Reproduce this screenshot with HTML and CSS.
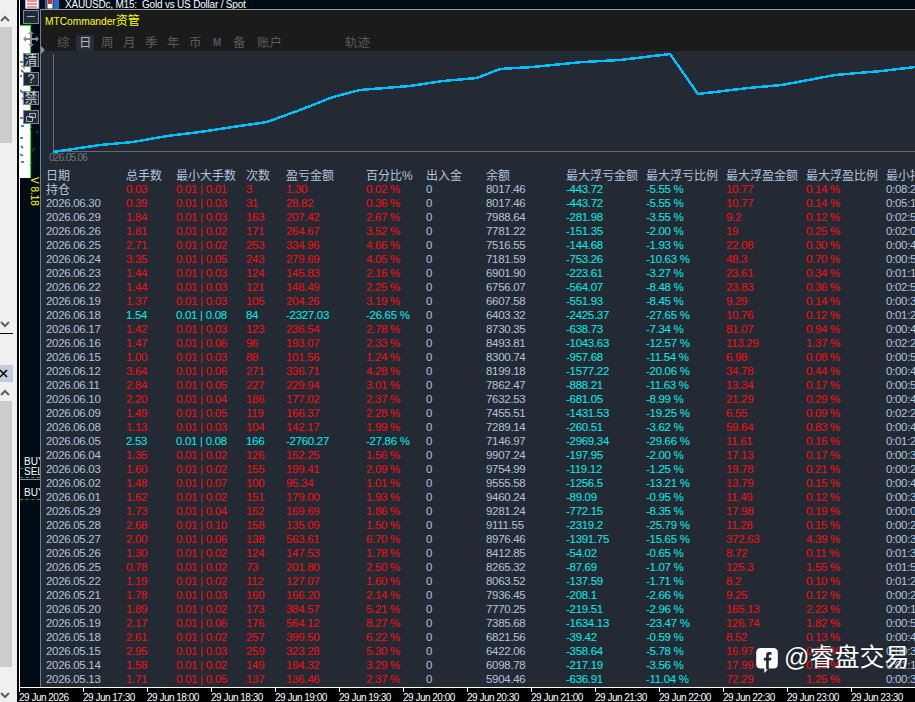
FILE: index.html
```html
<!DOCTYPE html>
<html lang="zh">
<head>
    <meta charset="UTF-8">
    <title>MTCommander资管</title>
    <link rel="stylesheet" href="styles.css">
</head>
<body>
<div class="app">
    <div class="dock">
        <div class="scrollbar first">
            <svg class="chev" width="12" height="10" viewBox="0 0 12 10"><polyline points="1,7 5,3 9,7"/></svg>
            <div class="track"><div class="thumb thumb-a"></div></div>
            <svg class="chev" width="12" height="10" viewBox="0 0 12 10"><polyline points="1,3 5,7 9,3"/></svg>
        </div>
        <div class="dock-tab"><svg width="9" height="9" viewBox="0 0 9 9"><path d="M0 1 L7 8 M7 1 L0 8"/></svg></div>
        <div class="scrollbar second">
            <svg class="chev" width="12" height="10" viewBox="0 0 12 10"><polyline points="1,7 5,3 9,7"/></svg>
            <div class="track"><div class="thumb thumb-b"></div></div>
            <svg class="chev" width="12" height="10" viewBox="0 0 12 10"><polyline points="1,3 5,7 9,3"/></svg>
        </div>
    </div>

    <div class="terminal">
        <div class="chart-title">
            <svg class="title-icons" width="40" height="9" viewBox="0 0 40 9">
                <rect x="0" y="-3" width="14" height="12" fill="#fff" stroke="#2a6fc0"/>
                <path d="M2 1h10M2 4h10M2 7h10" stroke="#d22" stroke-width="1.2"/>
                <rect x="20" y="-3" width="14" height="12" fill="#1c6fd0"/>
                <rect x="22" y="-3" width="6" height="12" fill="#fff" stroke="#333"/>
                <rect x="23" y="0" width="4" height="4" fill="#c33"/>
            </svg>
            <span>XAUUSDc, M15:&nbsp; Gold vs US Dollar / Spot</span>
        </div>
        <div class="chart-area">
            <div class="tool-strip">
                <div class="mini-chart">
                    <svg width="20" height="153" viewBox="0 0 20 153">
                        <path d="M0 36h3M1 44l3 3M0 50h2M0 64l3 3M2 72l2 2M0 92h3M1 100h3M0 112h3M1 120l2 2M0 128l3 2M1 136h3" stroke="#1560b0" stroke-width="1.5"/>
                        <path d="M1 40h2M3 42h2" stroke="#c33" stroke-width="1"/>
                    </svg>
                </div>
                <svg class="noise" width="10" height="90" viewBox="0 0 10 90">
                    <path d="M0 2l2 2M3 6l2-2M6 8l2 2M1 30l2-2M0 44l2-2M6 48l2-2M2 66l3-3M0 80l2-2" stroke="#1560b0"/>
                </svg>
                <div class="tool-btn">
                    <svg width="8" height="2" viewBox="0 0 8 2"><rect width="8" height="1" y="0" fill="#aab"/></svg>
                </div>
                <div class="tool-move">
                    <svg width="16" height="16" viewBox="0 0 16 16"><path d="M8 0 L11 3 H9 V7 H13 V5 L16 8 L13 11 V9 H9 V13 H11 L8 16 L5 13 H7 V9 H3 V11 L0 8 L3 5 V7 H7 V3 H5 Z" fill="#8a8a8a"/></svg>
                </div>
                <div class="tool-btn">清</div>
                <div class="tool-btn">?</div>
                <div class="tool-btn">禁</div>
                <div class="tool-btn">
                    <svg width="10" height="9" viewBox="0 0 10 9"><path d="M3.5 .5h6v4h-6zM.5 3.5h6v5h-6z" fill="#222a33" stroke="#aeb6c2"/></svg>
                </div>
                <div class="version">V 8.18</div>
                <div class="level buy-a">BUY</div>
                <div class="level sell-a">SEL</div>
                <div class="dash dash-tick"></div>
                <div class="dash dash-a"></div>
                <div class="sep"></div>
                <div class="level buy-b">BUY</div>
                <div class="dash dash-b"></div>
            </div>
            <div class="panel">
                <div class="panel-head">
                    <div class="panel-title">MTCommander<span class="panel-title-cjk">资管</span></div>
                    <div class="tabs">
                        <span class="tab">综</span>
                        <span class="tab active">日</span>
                        <span class="tab">周</span>
                        <span class="tab">月</span>
                        <span class="tab">季</span>
                        <span class="tab">年</span>
                        <span class="tab">币</span>
                        <span class="tab mark">M</span>
                        <span class="tab">备</span>
                        <span class="tab wide">账户</span>
                        <span class="tab wide trail">轨迹</span>
                    </div>
                </div>
                <div class="equity">
                    <svg width="874" height="116" viewBox="41 51 874 116">
                        <path d="M53.500 54 V151.500 H915" fill="none" stroke="#6a6a6a"/>
                        <polyline class="equity-line" points="53,152 100,145 133,142 167,136 200,132 233,127 267,122 300,110 333,97 360,90 410,86 443,81 477,78 500,69 533,67 583,62 620,60 670,54 698,94 748,88 782,85 835,75 882,71 915,67"/>
                    </svg>
                    <span class="equity-date">026.05.06</span>
                    <span class="collapse"></span>
                </div>
                <table class="stats">
                    <colgroup>
                        <col class="w80"><col class="w50"><col class="w70"><col class="w40"><col class="w80"><col class="w60"><col class="w60"><col class="w80"><col class="w80"><col class="w80"><col class="w80"><col class="w80"><col class="w80">
                    </colgroup>
                    <thead>
                        <tr><th>日期<th>总手数<th>最小大手数<th>次数<th>盈亏金额<th>百分比%<th>出入金<th>余额<th>最大浮亏金额<th>最大浮亏比例<th>最大浮盈金额<th>最大浮盈比例<th>最小持仓时间
                    </thead>
                    <tbody>
                        <tr><td class="cjk">持仓<td>0.03<td>0.01 | 0.01<td>3<td>1.30<td>0.02 %<td>0<td>8017.46<td>-443.72<td>-5.55 %<td>10.77<td>0.14 %<td>0:08:20
                        <tr><td>2026.06.30<td>0.39<td>0.01 | 0.03<td>31<td>28.82<td>0.36 %<td>0<td>8017.46<td>-443.72<td>-5.55 %<td>10.77<td>0.14 %<td>0:05:10
                        <tr><td>2026.06.29<td>1.84<td>0.01 | 0.03<td>163<td>207.42<td>2.67 %<td>0<td>7988.64<td>-281.98<td>-3.55 %<td>9.2<td>0.12 %<td>0:02:50
                        <tr><td>2026.06.26<td>1.81<td>0.01 | 0.02<td>171<td>264.67<td>3.52 %<td>0<td>7781.22<td>-151.35<td>-2.00 %<td>19<td>0.25 %<td>0:02:00
                        <tr><td>2026.06.25<td>2.71<td>0.01 | 0.02<td>253<td>334.96<td>4.66 %<td>0<td>7516.55<td>-144.68<td>-1.93 %<td>22.08<td>0.30 %<td>0:00:40
                        <tr><td>2026.06.24<td>3.35<td>0.01 | 0.05<td>243<td>279.69<td>4.05 %<td>0<td>7181.59<td>-753.26<td>-10.63 %<td>48.3<td>0.70 %<td>0:00:50
                        <tr><td>2026.06.23<td>1.44<td>0.01 | 0.03<td>124<td>145.83<td>2.16 %<td>0<td>6901.90<td>-223.61<td>-3.27 %<td>23.61<td>0.34 %<td>0:01:10
                        <tr><td>2026.06.22<td>1.44<td>0.01 | 0.03<td>121<td>148.49<td>2.25 %<td>0<td>6756.07<td>-564.07<td>-8.48 %<td>23.83<td>0.36 %<td>0:02:50
                        <tr><td>2026.06.19<td>1.37<td>0.01 | 0.03<td>105<td>204.26<td>3.19 %<td>0<td>6607.58<td>-551.93<td>-8.45 %<td>9.29<td>0.14 %<td>0:00:30
                        <tr class="loss"><td>2026.06.18<td>1.54<td>0.01 | 0.08<td>84<td>-2327.03<td>-26.65 %<td>0<td>6403.32<td>-2425.37<td>-27.65 %<td>10.76<td>0.12 %<td>0:01:20
                        <tr><td>2026.06.17<td>1.42<td>0.01 | 0.03<td>123<td>236.54<td>2.78 %<td>0<td>8730.35<td>-638.73<td>-7.34 %<td>81.07<td>0.94 %<td>0:00:40
                        <tr><td>2026.06.16<td>1.47<td>0.01 | 0.06<td>96<td>193.07<td>2.33 %<td>0<td>8493.81<td>-1043.63<td>-12.57 %<td>113.29<td>1.37 %<td>0:02:20
                        <tr><td>2026.06.15<td>1.00<td>0.01 | 0.03<td>88<td>101.56<td>1.24 %<td>0<td>8300.74<td>-957.68<td>-11.54 %<td>6.98<td>0.08 %<td>0:00:50
                        <tr><td>2026.06.12<td>3.64<td>0.01 | 0.06<td>271<td>336.71<td>4.28 %<td>0<td>8199.18<td>-1577.22<td>-20.06 %<td>34.78<td>0.44 %<td>0:00:40
                        <tr><td>2026.06.11<td>2.84<td>0.01 | 0.05<td>227<td>229.94<td>3.01 %<td>0<td>7862.47<td>-888.21<td>-11.63 %<td>13.34<td>0.17 %<td>0:00:50
                        <tr><td>2026.06.10<td>2.20<td>0.01 | 0.04<td>186<td>177.02<td>2.37 %<td>0<td>7632.53<td>-681.05<td>-8.99 %<td>21.29<td>0.29 %<td>0:00:40
                        <tr><td>2026.06.09<td>1.49<td>0.01 | 0.05<td>119<td>166.37<td>2.28 %<td>0<td>7455.51<td>-1431.53<td>-19.25 %<td>6.55<td>0.09 %<td>0:02:20
                        <tr><td>2026.06.08<td>1.13<td>0.01 | 0.03<td>104<td>142.17<td>1.99 %<td>0<td>7289.14<td>-260.51<td>-3.62 %<td>59.64<td>0.83 %<td>0:00:40
                        <tr class="loss"><td>2026.06.05<td>2.53<td>0.01 | 0.08<td>166<td>-2760.27<td>-27.86 %<td>0<td>7146.97<td>-2969.34<td>-29.66 %<td>11.61<td>0.16 %<td>0:01:20
                        <tr><td>2026.06.04<td>1.35<td>0.01 | 0.02<td>126<td>152.25<td>1.56 %<td>0<td>9907.24<td>-197.95<td>-2.00 %<td>17.13<td>0.17 %<td>0:00:30
                        <tr><td>2026.06.03<td>1.60<td>0.01 | 0.02<td>155<td>199.41<td>2.09 %<td>0<td>9754.99<td>-119.12<td>-1.25 %<td>19.78<td>0.21 %<td>0:00:20
                        <tr><td>2026.06.02<td>1.48<td>0.01 | 0.07<td>100<td>95.34<td>1.01 %<td>0<td>9555.58<td>-1256.5<td>-13.21 %<td>13.79<td>0.15 %<td>0:00:40
                        <tr><td>2026.06.01<td>1.62<td>0.01 | 0.02<td>151<td>179.00<td>1.93 %<td>0<td>9460.24<td>-89.09<td>-0.95 %<td>11.49<td>0.12 %<td>0:00:30
                        <tr><td>2026.05.29<td>1.73<td>0.01 | 0.04<td>152<td>169.69<td>1.86 %<td>0<td>9281.24<td>-772.15<td>-8.35 %<td>17.98<td>0.19 %<td>0:00:00
                        <tr><td>2026.05.28<td>2.68<td>0.01 | 0.10<td>158<td>135.09<td>1.50 %<td>0<td>9111.55<td>-2319.2<td>-25.79 %<td>11.28<td>0.15 %<td>0:00:20
                        <tr><td>2026.05.27<td>2.00<td>0.01 | 0.06<td>138<td>563.61<td>6.70 %<td>0<td>8976.46<td>-1391.75<td>-15.65 %<td>372.63<td>4.39 %<td>0:00:30
                        <tr><td>2026.05.26<td>1.30<td>0.01 | 0.02<td>124<td>147.53<td>1.78 %<td>0<td>8412.85<td>-54.02<td>-0.65 %<td>8.72<td>0.11 %<td>0:01:30
                        <tr><td>2026.05.25<td>0.78<td>0.01 | 0.02<td>73<td>201.80<td>2.50 %<td>0<td>8265.32<td>-87.69<td>-1.07 %<td>125.3<td>1.55 %<td>0:01:50
                        <tr><td>2026.05.22<td>1.19<td>0.01 | 0.02<td>112<td>127.07<td>1.60 %<td>0<td>8063.52<td>-137.59<td>-1.71 %<td>8.2<td>0.10 %<td>0:01:20
                        <tr><td>2026.05.21<td>1.78<td>0.01 | 0.03<td>160<td>166.20<td>2.14 %<td>0<td>7936.45<td>-208.1<td>-2.66 %<td>9.25<td>0.12 %<td>0:00:20
                        <tr><td>2026.05.20<td>1.89<td>0.01 | 0.02<td>173<td>384.57<td>5.21 %<td>0<td>7770.25<td>-219.51<td>-2.96 %<td>165.13<td>2.23 %<td>0:00:10
                        <tr><td>2026.05.19<td>2.17<td>0.01 | 0.06<td>176<td>564.12<td>8.27 %<td>0<td>7385.68<td>-1634.13<td>-23.47 %<td>126.74<td>1.82 %<td>0:00:50
                        <tr><td>2026.05.18<td>2.61<td>0.01 | 0.02<td>257<td>399.50<td>6.22 %<td>0<td>6821.56<td>-39.42<td>-0.59 %<td>8.52<td>0.13 %<td>0:00:40
                        <tr><td>2026.05.15<td>2.95<td>0.01 | 0.03<td>259<td>323.28<td>5.30 %<td>0<td>6422.06<td>-358.64<td>-5.78 %<td>16.97<td>0.28 %<td>0:00:30
                        <tr><td>2026.05.14<td>1.58<td>0.01 | 0.02<td>149<td>194.32<td>3.29 %<td>0<td>6098.78<td>-217.19<td>-3.56 %<td>17.99<td>0.29 %<td>0:01:10
                        <tr><td>2026.05.13<td>1.71<td>0.01 | 0.05<td>137<td>136.46<td>2.37 %<td>0<td>5904.46<td>-636.91<td>-11.04 %<td>72.29<td>1.25 %<td>0:00:30
                    </tbody>
                </table>
                <div class="watermark">
                    <svg width="26" height="27" viewBox="0 0 26 30"><path d="M6 1H20Q25 1 25 6V19Q25 24 20 24H15L10 29L10 24H6Q1 24 1 19V6Q1 1 6 1Z" fill="#fff"/><path d="M18 5.500H15.500Q12 5.500 12 9V12H9.500V15H12V25H15V15H17.500L18 12H15V9.500Q15 8.500 16 8.500H18Z" fill="#232a33"/></svg>
                    <span>@睿盘交易</span>
                </div>
            </div>
        </div>
        <div class="time-axis">
            <span>29 Jun 2026</span>
            <span>29 Jun 17:30</span>
            <span>29 Jun 18:00</span>
            <span>29 Jun 18:30</span>
            <span>29 Jun 19:00</span>
            <span>29 Jun 19:30</span>
            <span>29 Jun 20:00</span>
            <span>29 Jun 20:30</span>
            <span>29 Jun 21:00</span>
            <span>29 Jun 21:30</span>
            <span>29 Jun 22:00</span>
            <span>29 Jun 22:30</span>
            <span>29 Jun 23:00</span>
            <span>29 Jun 23:30</span>
        </div>
    </div>
</div>
</body>
</html>
```

FILE: styles.css
```css
html, body {
    margin: 0;
    height: 100%;
    overflow: hidden;
    background: #000;
}
.app {
    display: flex;
    width: 915px;
    height: 702px;
    font-family: "Liberation Sans", "Noto Sans CJK SC", sans-serif;
    overflow: hidden;
}

/* left dock with the two scrollbars */
.dock {
    width: 17px;
    flex: none;
    margin-right: 2px;
    background: #f0f0f0;
    display: flex;
    flex-direction: column;
}
.scrollbar {
    display: flex;
    flex-direction: column;
}
.scrollbar.first {
    height: 334px;
    padding-top: 14px;
    padding-bottom: 4px;
    box-sizing: border-box;
    border-bottom: 1px solid #000;
    width: 13px;
    margin-bottom: 31px;
}
.scrollbar.second {
    flex: 1;
    padding-top: 6px;
    padding-bottom: 2px;
    box-sizing: border-box;
}
.chev {
    flex: none;
}
.chev polyline {
    fill: none;
    stroke: #606060;
    stroke-width: 2;
}
.track {
    flex: 1;
    padding-top: 3px;
}
.thumb {
    width: 12px;
    background: #cdcdcd;
}
.thumb-a {
    height: 116px;
}
.thumb-b {
    height: 266px;
}
.dock-tab {
    height: 17px;
    width: 13px;
    background: #bfcddb;
    display: flex;
    align-items: center;
}
.dock-tab path {
    stroke: #000;
    stroke-width: 1.5;
    fill: none;
}

/* chart window */
.terminal {
    flex: 1;
    min-width: 0;
    display: flex;
    flex-direction: column;
    border-left: 1px solid #fff;
    background: #010b16;
}
.chart-title {
    height: 9px;
    flex: none;
    display: flex;
    align-items: flex-end;
    overflow: hidden;
    padding-left: 5px;
    color: #fff;
    font-size: 10px;
    letter-spacing: -.2px;
    line-height: 9px;
}
.chart-title span {
    white-space: nowrap;
}
.title-icons {
    flex: none;
}
.chart-area {
    flex: 1;
    min-height: 0;
    display: flex;
}

/* narrow column of tool buttons */
.tool-strip {
    position: relative;
    width: 20px;
    flex: none;
    padding: 1px 0 0 3px;
    box-sizing: border-box;
    display: flex;
    flex-direction: column;
    gap: 5px;
}
.mini-chart {
    position: absolute;
    left: 0;
    top: 16px;
    width: 10px;
    height: 152px;
    background: #fff;
    border-top: 1px solid #0f0;
    border-right: 1px solid #0f0;
    overflow: hidden;
}
.noise {
    position: absolute;
    left: 10px;
    top: 76px;
}
.tool-btn {
    position: relative;
    width: 14px;
    height: 12px;
    border: 1px solid #7f8a99;
    background: #222a33;
    color: #c8ced6;
    font-size: 13px;
    line-height: 12px;
    text-align: center;
    display: flex;
    align-items: center;
    justify-content: center;
    flex: none;
}
.tool-move {
    position: relative;
    height: 16px;
    line-height: 0;
    flex: none;
    margin-top: 2px;
    margin-bottom: 1px;
}
.version {
    position: absolute;
    left: 9px;
    top: 168px;
    writing-mode: vertical-rl;
    color: #ffff00;
    font-size: 10px;
    line-height: 10px;
    white-space: nowrap;
}
.level {
    position: absolute;
    left: 4px;
    color: #fff;
    font-size: 10px;
    line-height: 10px;
    width: 16px;
    overflow: hidden;
}
.buy-a { top: 448px; }
.sell-a { top: 458px; }
.buy-b { top: 479px; }
.dash {
    position: absolute;
    left: 0;
    width: 20px;
    border-top: 1px dashed #22b222;
}
.dash-tick {
    top: 459px;
    width: 3px;
}
.dash-a { top: 468px; }
.dash-b { top: 490px; }
.sep {
    position: absolute;
    left: 0;
    top: 470px;
    width: 20px;
    height: 1px;
    background: #8a8f96;
}

/* report panel */
.panel {
    position: relative;
    flex: 1;
    min-width: 0;
    overflow: hidden;
    background: #232a33;
    border-left: 1px solid #6d7f95;
    border-top: 1px solid #9a9a9a;
}
.panel-head {
    height: 41px;
    background: #1b1b1b;
    padding-left: 4px;
}
.panel-title {
    height: 25px;
    padding-top: 4px;
    box-sizing: border-box;
    color: #ffff00;
    font-size: 10.200px;
    line-height: 14px;
}
.panel-title-cjk {
    font-size: 12px;
}
.tabs {
    display: flex;
    padding-left: 12px;
    color: #5c5c5c;
    font-size: 12.500px;
    line-height: 16px;
}
.tab {
    width: 22px;
    flex: none;
    text-align: left;
}
.tab.active {
    color: #aab8c8;
    background: #2a2f36;
    width: 18px;
    margin: 0 7px 0 -3px;
    padding-left: 3px;
    box-sizing: border-box;
    border-radius: 2px;
}
.tab.mark {
    font-size: 10px;
    font-weight: bold;
    color: #4b5563;
    padding-left: 2px;
    box-sizing: border-box;
}
.tab.wide {
    width: 40px;
    margin-left: 2px;
}
.tab.trail {
    margin-left: 48px;
}
.equity {
    position: relative;
    height: 118px;
}
.equity svg {
    display: block;
}
.equity-line {
    fill: none;
    stroke: #00bfff;
    stroke-width: 2.500;
    shape-rendering: crispEdges;
}
.equity-date {
    position: absolute;
    left: 8px;
    top: 101px;
    color: #707780;
    font-size: 10px;
    letter-spacing: -.7px;
    line-height: 12px;
}
.collapse {
    position: absolute;
    left: 0;
    top: -5px;
    border-left: 4px solid #8a8f96;
    border-top: 4px solid transparent;
    border-bottom: 4px solid transparent;
}

.stats {
    table-layout: fixed;
    width: 870px;
    margin-left: 5px;
    border-collapse: collapse;
    font-size: 11.500px;
    letter-spacing: -.3px;
    line-height: 13px;
}
.w80 { width: 80px; }
.w70 { width: 70px; }
.w60 { width: 60px; }
.w50 { width: 50px; }
.w40 { width: 40px; }
.stats th, .stats td {
    padding: 0;
    height: 14px;
    text-align: left;
    vertical-align: top;
    white-space: nowrap;
    overflow: hidden;
    color: #b0c4de;
}
.stats th {
    font-size: 12px;
    font-weight: normal;
    letter-spacing: 0;
    line-height: 14px;
}
.stats .cjk {
    font-size: 12px;
    letter-spacing: 0;
    line-height: 14px;
}
.stats td:nth-child(n+2):nth-child(-n+6),
.stats td:nth-child(11),
.stats td:nth-child(12) {
    color: #ff0a10;
}
.stats td:nth-child(9),
.stats td:nth-child(10),
.stats .loss td:nth-child(n+2):nth-child(-n+6) {
    color: #00f0f0;
}

.watermark {
    position: absolute;
    left: 713px;
    top: 632px;
    display: flex;
    align-items: flex-start;
    gap: 4px;
    color: #fff;
    font-size: 25px;
    line-height: 30px;
    white-space: nowrap;
    text-shadow: 0 0 2px rgba(0, 0, 0, .6);
}
.watermark svg {
    margin-top: 5px;
}

/* bottom time scale */
.time-axis {
    height: 14px;
    flex: none;
    display: flex;
    margin-left: -1px;
    background: #000;
    border-top: 1px solid #fff;
    color: #fff;
    font-size: 10px;
    letter-spacing: -.5px;
    line-height: 19px;
    overflow: hidden;
}
.time-axis span {
    position: relative;
    width: 64px;
    flex: none;
    white-space: nowrap;
}
.time-axis span::before {
    content: "";
    position: absolute;
    left: 0;
    top: 0;
    width: 1px;
    height: 4px;
    background: #fff;
}
```
